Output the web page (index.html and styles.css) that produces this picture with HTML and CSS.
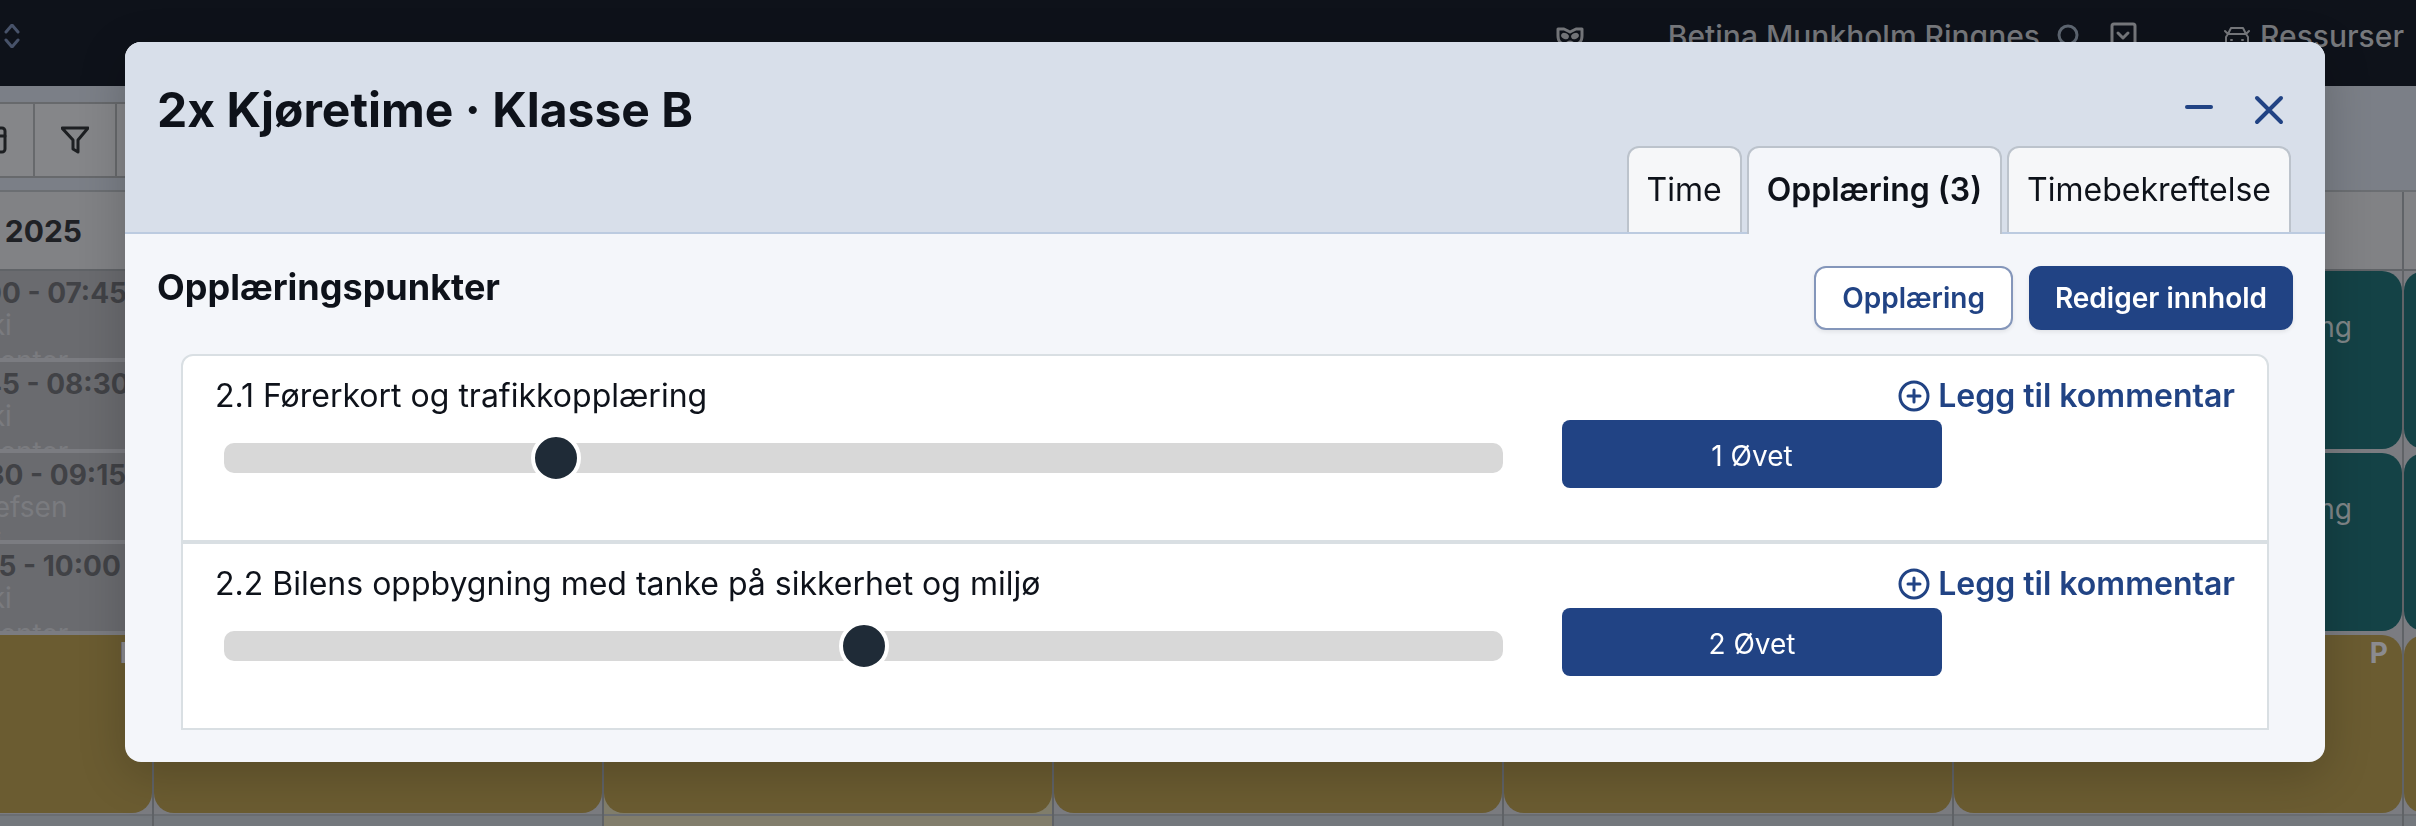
FILE: index.html
```html
<!DOCTYPE html>
<html lang="no">
<head>
  <meta charset="UTF-8">
  <meta name="viewport" content="width=device-width, initial-scale=1.0">
  <title>2x Kjøretime · Klasse B</title>
  <link rel="stylesheet" href="styles.css">
</head>
<body>

<header class="topbar">
  <svg class="icon-sort" viewBox="0 0 16 24"><path d="M2 8l6-7 6 7M2 16l6 7 6-7"/></svg>
  <nav class="topbar-nav">
    <svg class="icon-mask" viewBox="0 0 28 24"><path d="M2 2h6l6 3 6-3h6v7c0 6-4 8-7 8-2 0-3-2-5-2s-3 2-5 2c-3 0-7-2-7-8z"/><ellipse cx="9" cy="9" rx="4" ry="3" transform="rotate(25 9 9)"/><ellipse cx="19" cy="9" rx="4" ry="3" transform="rotate(-25 19 9)"/></svg>
    <a class="user-link" href="#">Betina Munkholm Ringnes</a>
    <svg class="icon-search" viewBox="0 0 24 28"><circle cx="12" cy="12" r="9"/></svg>
    <svg class="icon-box" viewBox="0 0 28 28"><rect x="2" y="2" width="23" height="24" rx="2"/><path d="M8 11l5 5 5-5"/></svg>
    <a class="resource-link" href="#">
      <svg class="icon-car" viewBox="0 0 26 26"><path d="M4 8l3-6h12l3 6M1 5l3 3M25 5l-3 3M2 23V11l2-3h18l2 3v12z"/><path d="M7 14h1M18 14h1"/></svg>
      Ressurser
    </a>
  </nav>
</header>

<div class="toolbar">
  <div class="btn-group">
    <button type="button" aria-label="Kalender">
      <svg viewBox="0 0 28 28"><rect x="2" y="2" width="24" height="24" rx="3"/><path d="M2 10h24"/></svg>
    </button>
    <button type="button" aria-label="Filter">
      <svg viewBox="0 0 28 28"><path d="M1 2h26L17 14v12l-5-3v-9z"/></svg>
    </button>
    <button type="button" aria-label="Mer"></button>
  </div>
</div>

<main class="calendar">
  <section class="day">
    <h4 class="day-head">mai 2025</h4>
    <div class="day-body">
      <div class="event busy"><b>07:00 - 07:45</b>Wolki<br>Kursenter</div>
      <div class="event busy"><b>07:45 - 08:30</b>Wolki<br>Kursenter</div>
      <div class="event busy"><b>08:30 - 09:15</b>Torrefsen<br>Valsi</div>
      <div class="event busy"><b>09:15 - 10:00</b>Wolki<br>Kursenter</div>
      <div class="event parked">P</div>
    </div>
  </section>
  <section class="day">
    <h4 class="day-head"></h4>
    <div class="day-body">
      <div class="event lesson"></div>
      <div class="event lesson"></div>
      <div class="event parked"></div>
    </div>
  </section>
  <section class="day today">
    <h4 class="day-head"></h4>
    <div class="day-body">
      <div class="event lesson"></div>
      <div class="event lesson"></div>
      <div class="event parked"></div>
    </div>
  </section>
  <section class="day">
    <h4 class="day-head"></h4>
    <div class="day-body">
      <div class="event lesson"></div>
      <div class="event lesson"></div>
      <div class="event parked"></div>
    </div>
  </section>
  <section class="day">
    <h4 class="day-head"></h4>
    <div class="day-body">
      <div class="event lesson"></div>
      <div class="event lesson"></div>
      <div class="event parked"></div>
    </div>
  </section>
  <section class="day">
    <h4 class="day-head"></h4>
    <div class="day-body">
      <div class="event lesson"><br>Opplæring</div>
      <div class="event lesson"><br>Opplæring</div>
      <div class="event parked">P</div>
    </div>
  </section>
  <section class="day">
    <h4 class="day-head"></h4>
    <div class="day-body">
      <div class="event lesson"></div>
      <div class="event lesson"></div>
      <div class="event parked"></div>
    </div>
  </section>
</main>

<div class="overlay">
  <div class="modal" role="dialog" aria-labelledby="modal-title">
    <div class="modal-header">
      <div class="modal-title-row">
        <h2 id="modal-title">2x Kjøretime · Klasse B</h2>
        <div class="window-buttons">
          <button type="button" aria-label="Minimer"><svg viewBox="0 0 32 32"><path d="M4 13h24"/></svg></button>
          <button type="button" aria-label="Lukk"><svg viewBox="0 0 32 32"><path d="M4 4l24 24M28 4L4 28"/></svg></button>
        </div>
      </div>
      <div class="tabs" role="tablist">
        <button type="button" class="tab" role="tab">Time</button>
        <button type="button" class="tab active" role="tab" aria-selected="true">Opplæring (3)</button>
        <button type="button" class="tab" role="tab">Timebekreftelse</button>
      </div>
    </div>

    <div class="modal-body">
      <div class="section-head">
        <h3>Opplæringspunkter</h3>
        <div class="actions">
          <button type="button" class="btn btn-outline">Opplæring</button>
          <button type="button" class="btn btn-primary">Rediger innhold</button>
        </div>
      </div>

      <div class="points">
        <div class="point">
          <div class="point-head">
            <label for="point-21">2.1 Førerkort og trafikkopplæring</label>
            <a class="comment-link" href="#">
              <svg viewBox="0 0 32 32"><circle cx="16" cy="16" r="14"/><path d="M16 10v12M10 16h12"/></svg>
              Legg til kommentar
            </a>
          </div>
          <div class="point-level">
            <input type="range" id="point-21" min="0" max="4" value="1">
            <button type="button" class="level">1 Øvet</button>
          </div>
        </div>
        <div class="point">
          <div class="point-head">
            <label for="point-22">2.2 Bilens oppbygning med tanke på sikkerhet og miljø</label>
            <a class="comment-link" href="#">
              <svg viewBox="0 0 32 32"><circle cx="16" cy="16" r="14"/><path d="M16 10v12M10 16h12"/></svg>
              Legg til kommentar
            </a>
          </div>
          <div class="point-level">
            <input type="range" id="point-22" min="0" max="4" value="2">
            <button type="button" class="level">2 Øvet</button>
          </div>
        </div>
      </div>
    </div>
  </div>
</div>

</body>
</html>
```
FILE: styles.css
```css
* {
  box-sizing: border-box;
}

body {
  font-family: Inter, "Liberation Sans", sans-serif;
  font-size: 32px;
  color: #0e121a;
  background-color: #7b7f87;
  margin: 0;
  height: 100vh;
  overflow: hidden;
  display: flex;
  flex-direction: column;
}

h2, h3, h4 {
  margin: 0;
}

button {
  font-family: inherit;
  cursor: pointer;
}

a {
  text-decoration: none;
}

svg {
  fill: none;
  stroke: currentColor;
  stroke-width: 3;
  stroke-linecap: round;
  stroke-linejoin: round;
  flex: none;
}

/* top bar */
.topbar {
  display: flex;
  justify-content: space-between;
  height: 86px;
  padding: 18px 12px 0 4px;
  background-color: #0e121a;
  color: #77797d;
}

.topbar a {
  color: inherit;
  font-size: 30px;
  font-weight: 500;
  line-height: 36px;
}

.topbar-nav {
  display: flex;
  align-items: flex-start;
}

.icon-sort {
  width: 16px;
  height: 24px;
  margin-top: 6px;
  color: #475269;
}

.icon-mask {
  width: 28px;
  height: 24px;
  margin: 9px 84px 0 0;
}

.icon-mask ellipse {
  fill: currentColor;
  stroke: none;
}

.icon-search {
  width: 24px;
  height: 28px;
  margin: 5px 30px 0 16px;
  color: #5e6772;
}

.icon-box {
  width: 28px;
  height: 28px;
  margin: 4px 86px 0 0;
}

.resource-link {
  display: flex;
  gap: 10px;
}

.icon-car {
  width: 26px;
  height: 26px;
  margin-top: 8px;
  stroke-width: 2;
}

/* toolbar */
.toolbar {
  height: 104px;
  padding-top: 16px;
  flex: none;
}

.btn-group {
  display: flex;
  height: 76px;
  margin-left: -47px;
  border-top: 2px solid #67696c;
  border-bottom: 2px solid #67696c;
  width: 400px;
}

.btn-group button {
  width: 82px;
  padding: 0;
  border: none;
  border-right: 2px solid #67696c;
  background-color: #858689;
  color: #1d1f22;
}

.btn-group svg {
  width: 28px;
  height: 28px;
  vertical-align: middle;
}

/* calendar, scrolled part of a day to the right */
.calendar {
  flex: 1;
  display: grid;
  grid-template-columns: repeat(7, 450px);
  margin-left: -296px;
  border-top: 2px solid #6b6e72;
}

.day {
  display: flex;
  flex-direction: column;
  border-right: 2px solid #606367;
}

.day-head {
  height: 79px;
  padding: 0 70px 0 0;
  border-bottom: 2px solid #606367;
  background-color: #818285;
  color: #1f2125;
  font-size: 30px;
  line-height: 78px;
  text-align: right;
}

.day-body {
  flex: 1;
  display: flex;
  flex-direction: column;
  gap: 4px;
  background: linear-gradient(#7b7c81 543px, #6b6e72 543px, #6b6e72 545px, #74787d 545px);
}

.today .day-body {
  background: linear-gradient(#827e6c 543px, #6b6e72 543px, #6b6e72 545px, #827e6c 545px);
}

.event {
  overflow: hidden;
  font-size: 28px;
  line-height: 32px;
}

.busy {
  height: 87px;
  padding: 8px 0 0 236px;
  background-color: #6a6b6f;
  color: #7a7b7f;
  line-height: 36px;
  white-space: nowrap;
}

.busy b {
  display: block;
  color: #414246;
  line-height: 28px;
}

.lesson {
  height: 178px;
  padding: 8px 50px 0 0;
  border-radius: 20px;
  background-color: #144246;
  color: #7f8688;
  text-align: right;
}

.parked {
  height: 178px;
  padding: 2px 14px 0 0;
  border-radius: 20px;
  background-color: #6b5c31;
  color: #8b8b8f;
  font-weight: 700;
  text-align: right;
}

/* modal */
.overlay {
  position: fixed;
  inset: 0;
  padding: 42px 91px 0 125px;
}

.modal {
  border-radius: 16px;
  background-color: #f4f6fa;
  box-shadow: 0 12px 48px rgba(0, 0, 0, 0.2);
}

.modal-header {
  padding: 32px 32px 0;
  border-bottom: 2px solid #bccbe0;
  border-radius: 16px 16px 0 0;
  background-color: #d8dfea;
}

.modal-title-row {
  display: flex;
  justify-content: space-between;
  height: 72px;
}

.modal-title-row h2 {
  font-size: 48px;
  line-height: 72px;
}

.window-buttons {
  display: flex;
  gap: 38px;
  padding: 20px 8px 0 0;
}

.window-buttons button {
  width: 32px;
  height: 32px;
  padding: 0;
  border: none;
  background: none;
  color: #214384;
}

.window-buttons svg {
  display: block;
  width: 32px;
  height: 32px;
  stroke-width: 4;
}

.tabs {
  display: flex;
  justify-content: flex-end;
  gap: 5px;
  margin-bottom: -2px;
  padding-right: 2px;
}

.tab {
  height: 86px;
  margin-bottom: 2px;
  padding: 0 18px 2px;
  border: 2px solid #bcc3cc;
  border-bottom: none;
  border-radius: 12px 12px 0 0;
  background-color: #f6f7f9;
  color: #0e121a;
  font-size: 32px;
}

.tab.active {
  height: 88px;
  margin-bottom: 0;
  padding-bottom: 4px;
  background-color: #f4f6fa;
  font-weight: 600;
}

.modal-body {
  padding: 32px;
}

.section-head {
  display: flex;
  justify-content: space-between;
  margin-bottom: 24px;
}

.section-head h3 {
  font-size: 36px;
  font-weight: 700;
  line-height: 42px;
}

.actions {
  display: flex;
  gap: 16px;
}

.btn {
  height: 64px;
  padding: 0 26px;
  border: 2px solid #214384;
  border-radius: 12px;
  box-shadow: 0 2px 4px rgba(0, 0, 0, 0.08);
  font-size: 28px;
  font-weight: 600;
}

.btn-outline {
  border-color: #8496ba;
  background-color: #fff;
  color: #214384;
}

.btn-primary {
  padding: 0 24px;
  background-color: #214384;
  color: #fff;
}

.points {
  margin: 0 24px;
  border: 2px solid #d9dfe3;
  border-radius: 12px 12px 0 0;
  background-color: #fff;
}

.point {
  padding: 16px 32px 52px;
}

.point + .point {
  border-top: 4px solid #d9dfe3;
}

.point-head {
  display: flex;
  justify-content: space-between;
  line-height: 48px;
}

.comment-link {
  display: flex;
  align-items: center;
  gap: 8px;
  color: #214384;
  font-weight: 600;
}

.comment-link svg {
  width: 32px;
  height: 32px;
}

.point-level {
  display: grid;
  grid-template-columns: 1fr 380px 234px;
  gap: 59px;
  padding-left: 9px;
}

.point-level input {
  appearance: none;
  width: 100%;
  height: 30px;
  margin: 23px 0 0;
  border-radius: 10px;
  background-color: #d8d8d8;
}

.point-level input::-webkit-slider-thumb {
  appearance: none;
  width: 50px;
  height: 50px;
  border: 4px solid #fff;
  border-radius: 50%;
  background-color: #1f2b37;
}

.level {
  height: 68px;
  padding-top: 4px;
  border: none;
  border-radius: 8px;
  background-color: #214384;
  color: #fff;
  font-size: 28px;
}
```
